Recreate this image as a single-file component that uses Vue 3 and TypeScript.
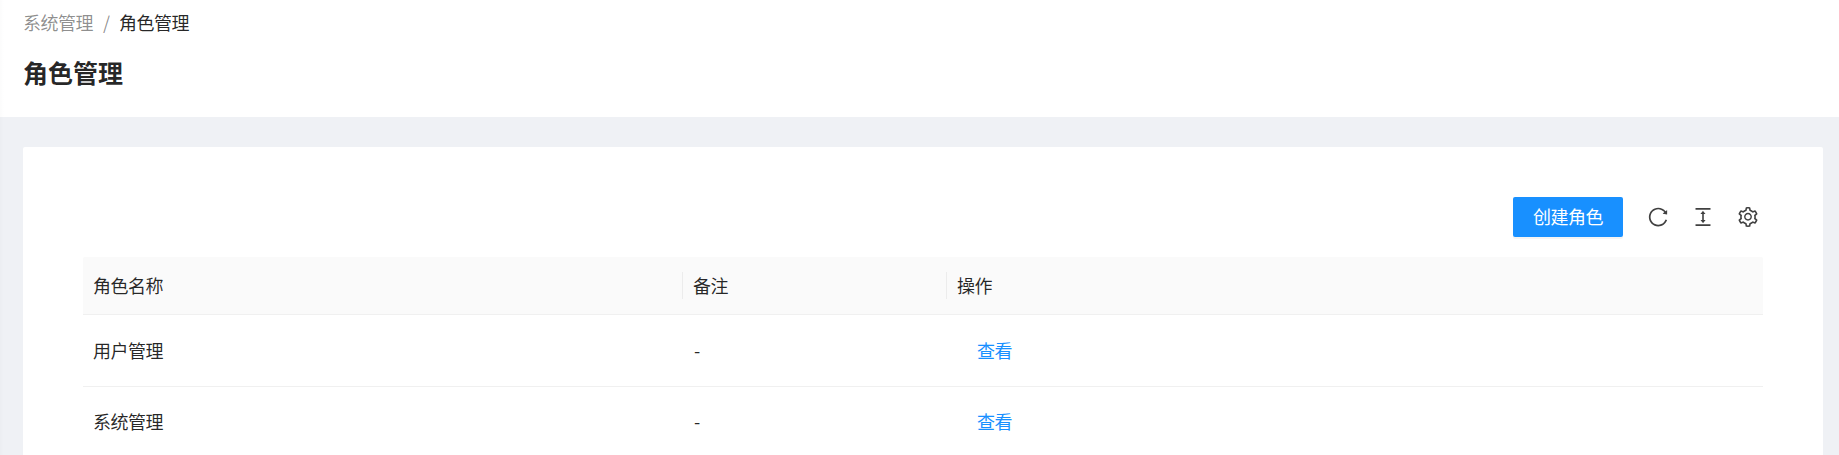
<script setup lang="ts">
interface Role {
  id: number
  name: string
  remark: string
}

const roles: Role[] = [
  { id: 1, name: '用户管理', remark: '-' },
  { id: 2, name: '系统管理', remark: '-' },
]

const columns: string[] = ['角色名称', '备注', '操作']

const tools: { name: string; path: string }[] = [
  {
    name: '刷新',
    path: 'M909.1 209.3l-56.4 44.1C775.8 155.1 656.2 92 521.9 92 290 92 102.3 279.5 102 511.5 101.7 743.7 289.8 932 521.9 932c181.3 0 335.8-115 394.6-276.1 1.5-4.2-.7-8.9-4.9-10.3l-56.7-19.5a8 8 0 00-10.1 4.8c-1.8 5-3.8 10-5.9 14.9-17.3 41-42.1 77.8-73.7 109.4A344.77 344.77 0 01655.9 829c-42.3 17.9-87.4 27-133.8 27-46.5 0-91.5-9.1-133.8-27A341.5 341.5 0 01279 755.2a342.16 342.16 0 01-73.7-109.4c-17.9-42.4-27-87.4-27-133.9s9.1-91.5 27-133.9c17.3-41 42.1-77.8 73.7-109.4 31.6-31.6 68.4-56.4 109.3-73.8 42.3-17.9 87.4-27 133.8-27 46.5 0 91.5 9.1 133.8 27a341.5 341.5 0 01109.3 73.8c9.9 9.9 19.2 20.4 27.8 31.4l-60.2 47a8 8 0 003 14.1l175.6 43c5 1.2 9.9-2.6 9.9-7.7l.8-180.9c-.1-6.6-7.8-10.3-13-6.2z',
  },
  {
    name: '密度',
    path: 'M840 836H184c-4.4 0-8 3.6-8 8v60c0 4.4 3.6 8 8 8h656c4.4 0 8-3.6 8-8v-60c0-4.4-3.6-8-8-8zm0-724H184c-4.4 0-8 3.6-8 8v60c0 4.4 3.6 8 8 8h656c4.4 0 8-3.6 8-8v-60c0-4.4-3.6-8-8-8zM610.8 378c6 0 9.4-7 5.7-11.7L515.7 238.7a7.14 7.14 0 00-11.3 0L403.6 366.3a7.23 7.23 0 005.7 11.7H476v268h-62.8c-6 0-9.4 7-5.7 11.7l100.8 127.5c2.9 3.7 8.5 3.7 11.3 0l100.8-127.5c3.7-4.7.4-11.7-5.7-11.7H548V378h62.8z',
  },
  {
    name: '列设置',
    path: 'M924.8 625.7l-65.5-56c3.1-19 4.7-38.4 4.7-57.8s-1.6-38.8-4.7-57.8l65.5-56a32.03 32.03 0 009.3-35.2l-.9-2.6a443.74 443.74 0 00-79.7-137.9l-1.8-2.1a32.12 32.12 0 00-35.1-9.5l-81.3 28.9c-30-24.6-63.5-44-99.7-57.6l-15.7-85a32.05 32.05 0 00-25.8-25.7l-2.7-.5c-52.1-9.4-106.9-9.4-159 0l-2.7.5a32.05 32.05 0 00-25.8 25.7l-15.8 85.4a351.86 351.86 0 00-99 57.4l-81.9-29.1a32 32 0 00-35.1 9.5l-1.8 2.1a446.02 446.02 0 00-79.7 137.9l-.9 2.6c-4.5 12.5-.8 26.5 9.3 35.2l66.3 56.6c-3.1 18.8-4.6 38-4.6 57.1 0 19.2 1.5 38.4 4.6 57.1L99 625.5a32.03 32.03 0 00-9.3 35.2l.9 2.6c18.1 50.4 44.9 96.9 79.7 137.9l1.8 2.1a32.12 32.12 0 0035.1 9.5l81.9-29.1c29.8 24.5 63.1 43.9 99 57.4l15.8 85.4a32.05 32.05 0 0025.8 25.7l2.7.5a449.4 449.4 0 00159 0l2.7-.5a32.05 32.05 0 0025.8-25.7l15.7-85a350 350 0 0099.7-57.6l81.3 28.9a32 32 0 0035.1-9.5l1.8-2.1c34.8-41.1 61.6-87.5 79.7-137.9l.9-2.6c4.5-12.3.8-26.3-9.3-35zM788.3 465.9c2.5 15.1 3.8 30.6 3.8 46.1s-1.3 31-3.8 46.1l-6.6 40.1 74.7 63.9a370.03 370.03 0 01-42.6 73.6L721 702.8l-31.4 25.8c-23.9 19.6-50.5 35-79.3 45.8l-38.1 14.3-17.9 97a377.5 377.5 0 01-85 0l-17.9-97.2-37.8-14.5c-28.5-10.8-55-26.2-78.7-45.7l-31.4-25.9-93.4 33.2c-17-22.9-31.2-47.6-42.6-73.6l75.5-64.5-6.5-40c-2.4-14.9-3.7-30.3-3.7-45.5 0-15.3 1.2-30.6 3.7-45.5l6.5-40-75.5-64.5c11.3-26.1 25.6-50.7 42.6-73.6l93.4 33.2 31.4-25.9c23.7-19.5 50.2-34.9 78.7-45.7l37.9-14.3 17.9-97.2c28.1-3.2 56.8-3.2 85 0l17.9 97 38.1 14.3c28.7 10.8 55.4 26.2 79.3 45.8l31.4 25.8 92.8-32.9c17 22.9 31.2 47.6 42.6 73.6L781.8 426l6.5 39.9zM512 326c-97.2 0-176 78.8-176 176s78.8 176 176 176 176-78.8 176-176-78.8-176-176-176zm79.2 255.2A111.6 111.6 0 01512 614c-29.9 0-58-11.7-79.2-32.8A111.6 111.6 0 01400 502c0-29.9 11.7-58 32.8-79.2C454 401.6 482.1 390 512 390c29.9 0 58 11.6 79.2 32.8A111.6 111.6 0 01624 502c0 29.9-11.7 58-32.8 79.2z',
  },
]
</script>

<template>
  <div class="page">
    <header class="page-header">
      <nav class="breadcrumb">
        <span class="crumb">系统管理</span>
        <span class="separator">/</span>
        <span class="crumb current">角色管理</span>
      </nav>
      <h1 class="title">角色管理</h1>
    </header>

    <main class="card">
      <div class="toolbar">
        <button type="button" class="create">创建角色</button>
        <span v-for="tool in tools" :key="tool.name" class="tool">
          <svg viewBox="64 64 896 896" width="20" height="20" fill="currentColor">
            <path :d="tool.path" />
          </svg>
        </span>
      </div>

      <div class="table">
        <div class="row head">
          <div v-for="column in columns" :key="column" class="cell">{{ column }}</div>
        </div>
        <div v-for="role in roles" :key="role.id" class="row">
          <div class="cell">{{ role.name }}</div>
          <div class="cell remark">{{ role.remark }}</div>
          <div class="cell actions"><a class="link">查看</a></div>
        </div>
      </div>
    </main>
  </div>
</template>

<style>
body {
  margin: 0;
  background: #f0f2f5;
  overflow: hidden;
}
</style>

<style scoped>
.page {
  position: relative;
  box-sizing: border-box;
  height: 455px;
  overflow: hidden;
  background: #eff1f5;
  color: rgba(0, 0, 0, 0.85);
  font-family: "Noto Sans CJK SC", sans-serif;
  font-size: 18px;
  font-weight: 400;
  letter-spacing: -0.5px;
  line-height: 27.5px;
}

/* Faint shadow cast by the side menu */
.page::before {
  content: "";
  position: absolute;
  top: 0;
  bottom: 0;
  left: 0;
  width: 4px;
  background: linear-gradient(to right, rgba(0, 21, 41, 0.015), rgba(0, 21, 41, 0));
}

.page-header {
  box-sizing: border-box;
  height: 117px;
  padding: 9px 23px 0;
  background: #fff;
}

.breadcrumb {
  display: flex;
}

.crumb,
.separator {
  color: rgba(0, 0, 0, 0.45);
}

.separator {
  width: 6px;
  margin: 0 10px;
}

.crumb.current {
  color: rgba(0, 0, 0, 0.85);
}

.title {
  margin: 15px 0 0;
  font-size: 25px;
  font-weight: 700;
  letter-spacing: 0;
  line-height: 40px;
}

.card {
  box-sizing: border-box;
  height: 340px;
  margin: 30px 16px 0 23px;
  padding: 50px 60px 0;
  border-radius: 2px 2px 0 0;
  background: #fff;
}

.toolbar {
  display: flex;
  align-items: center;
  justify-content: flex-end;
  gap: 25px;
  height: 40px;
  padding-right: 5px;
}

.create {
  width: 110px;
  height: 40px;
  padding: 0;
  border: 0;
  border-radius: 2px;
  background: #1890ff;
  box-shadow: 0 2px 0 rgba(0, 0, 0, 0.045);
  color: #fff;
  font: inherit;
  letter-spacing: inherit;
}

.tool {
  display: flex;
  color: rgba(0, 0, 0, 0.75);
}

.table {
  margin-top: 20px;
}

.row {
  display: grid;
  grid-template-columns: 600px 264px 1fr;
  align-items: center;
  box-sizing: border-box;
  height: 72px;
  border-bottom: 1px solid #f0f0f0;
}

.row:last-child {
  height: 70px;
}

.row.head {
  height: 58px;
  border-radius: 2px 2px 0 0;
  background: #fafafa;
}

.cell {
  box-sizing: border-box;
  padding-left: 10px;
}

.head .cell:not(:last-child) {
  border-right: 1px solid #ececec;
}

.cell.remark {
  padding-left: 11px;
}

.cell.actions {
  padding-left: 30px;
}

.link {
  color: #1890ff;
}
</style>
